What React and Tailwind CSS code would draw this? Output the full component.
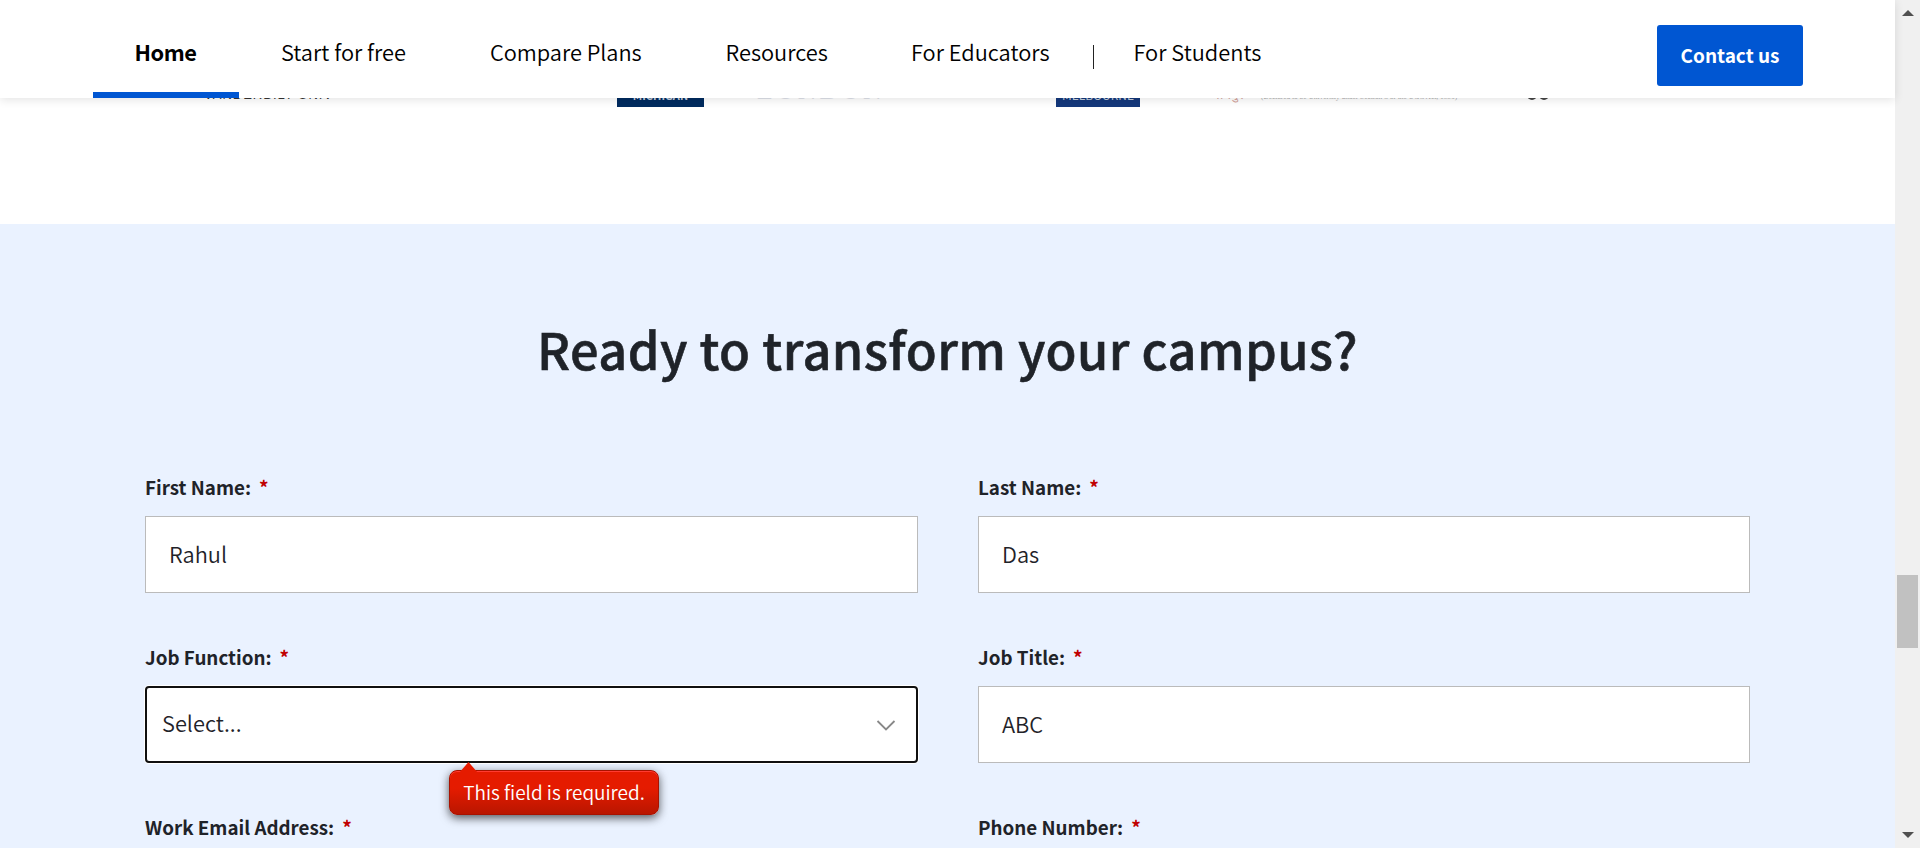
import React from "react";

const font = 'font-["Noto_Sans_CJK_SC","Source_Sans_Pro",sans-serif]';

function NavItem({ children, className }) {
  return <span className={`block whitespace-nowrap ${className}`}>{children}</span>;
}

function Header() {
  return (
    <header className="relative z-10 flex h-[98px] shrink-0 items-stretch bg-white pl-[93px] pr-[92px] text-[21.8px] font-[350] leading-[33px] text-black shadow-[0_2px_9px_rgba(0,0,0,0.11)]">
      <nav className="flex flex-1 items-stretch">
        <div className="w-[146px] border-b-[6px] border-[#0056d2] pt-[35px] pl-[41.5px] font-bold tracking-[-0.5px]">
          <NavItem className="">Home</NavItem>
        </div>
        <div className="flex pt-[35px]">
          <NavItem className="w-[209px] pl-[42px]">Start for free</NavItem>
          <NavItem className="w-[236px] pl-[42px] tracking-[-0.05px]">Compare Plans</NavItem>
          <NavItem className="w-[186px] pl-[41.5px]">Resources</NavItem>
          <NavItem className="w-[223px] pl-[41px]">For Educators</NavItem>
          <span className="mt-2.5 h-6 w-px bg-[#222]" />
          <NavItem className="pl-[39.5px]">For Students</NavItem>
        </div>
      </nav>
      <button className="mt-[25px] h-[61px] w-[146px] rounded-[3px] bg-[#0056d2] pb-0.5 text-[19px] font-bold text-white">
        Contact us
      </button>
    </header>
  );
}

function Logos() {
  return (
    <div className="flex h-[126px] items-start whitespace-nowrap text-[10px] leading-[12px]">
      <div className="-mt-[9px] ml-[204px] w-[413px] font-['Liberation_Sans'] text-[13px] tracking-[1px] text-[#333]">VANDERBILT UNIV</div>
      <div className="h-[9px] w-[87px] bg-[#002b5f] text-center font-bold text-[#c4cede]"><div className="-mt-[9px] h-3 text-[11px]">MICHIGAN</div></div>
      <div className="-mt-[19px] ml-[53px] w-[299px] font-['Liberation_Serif'] text-[26px] leading-6 tracking-[3px] text-[#dde0e8]">LONDON</div>
      <div className="h-[9px] w-[84px] bg-[#14387b] text-center text-[#c4cede]"><div className="-mt-[9px] h-3 text-[12px]">MELBOURNE</div></div>
      <div className="-mt-[9px] ml-[70px] w-[51px] font-['Liberation_Serif'] text-[13px] text-[#d3a49c]">जोधपुर</div>
      <div className="-mt-[7px] w-[266px] font-['Liberation_Serif'] text-[7.4px] text-[#aaa]">(Declared to be University under Section 3 of the UGC Act, 1956)</div>
      <div className="-mt-2 flex gap-0.5"><span className="h-[10px] w-[10px] rounded-full bg-[#444]" /><span className="h-[10px] w-[10px] rounded-full bg-[#444]" /></div>
    </div>
  );
}

function Label({ children }) {
  return (
    <label className="flex h-[30px] items-center gap-[8px] whitespace-nowrap text-[18.8px] font-bold leading-[30px] pb-px">
      {children}
      <span className="text-[#c00000]">*</span>
    </label>
  );
}

function Field({ label, value }) {
  return (
    <div className="h-[170px]">
      <Label>{label}</Label>
      <div className="mt-[14px] flex h-[77px] items-center border border-[#bbb] bg-white pb-px pl-[23px] text-[21.8px] font-[350]">
        {value}
      </div>
    </div>
  );
}

function Tooltip() {
  return (
    <div className="absolute left-[302px] top-[82px] h-[45px] w-[210px] rounded-[8px] border border-[#a81200] bg-linear-to-b from-[#e51b00] from-40% to-[#b91600] text-center text-[19px] leading-[42px] text-white shadow-[0_3px_10px_rgba(0,0,0,0.65),inset_0_1px_0_#ff3b30]">
      <svg className="absolute -top-[9px] left-[9px]" width="19" height="11" viewBox="0 0 19 11">
        <path d="M9.5 0L19 11H0Z" fill="#e51b00" />
      </svg>
      This field is required.
    </div>
  );
}

export default function App() {
  return (
    <div className={`flex h-[848px] w-[1920px] overflow-hidden bg-white text-[#1f2329] ${font}`}>
      <main className="flex w-[1895px] flex-col">
        <Header />
        <Logos />
        <section className="flex-1 bg-[#eaf2ff]">
          <h1 className="pt-[86px] text-center text-[50.5px] font-medium leading-[76px] tracking-[0.4px] [-webkit-text-stroke:0.6px_#1f2329]">Ready to transform your campus?</h1>
          <form className="mt-[86px] grid grid-cols-[773px_772px] gap-x-[60px] pl-[145px]">
            <Field label="First Name:" value="Rahul" />
            <Field label="Last Name:" value="Das" />
            <div className="h-[170px]">
              <Label>Job Function:</Label>
              <div className="relative mt-[14px] flex h-[77px] items-center justify-between rounded-[4px] border-2 border-[#101010] bg-white pl-[15px] pr-[20px] text-[21.8px] font-[350] shadow-[0_0_0_1px_#fff]">
                <span className="-mt-[3px]">Select...</span>
                <svg width="20" height="12" viewBox="0 0 20 12" fill="none" stroke="#888" strokeWidth="1.8">
                  <path d="M1.5 2L10 10.5L18.5 2" />
                </svg>
                <Tooltip />
              </div>
            </div>
            <Field label="Job Title:" value="ABC" />
            <Label>Work Email Address:</Label>
            <Label>Phone Number:</Label>
          </form>
        </section>
      </main>
      <aside className="flex w-[25px] flex-col items-center bg-[#f0f0f0] pt-[10px]">
        <svg width="12" height="6" viewBox="0 0 12 6"><path d="M6 0L12 6H0Z" fill="#505050" /></svg>
        <div className="mt-[559px] h-[73px] w-[21px] bg-[#c1c1c1]" />
        <svg className="mt-[184px]" width="12" height="6" viewBox="0 0 12 6"><path d="M0 0H12L6 6Z" fill="#505050" /></svg>
      </aside>
    </div>
  );
}
